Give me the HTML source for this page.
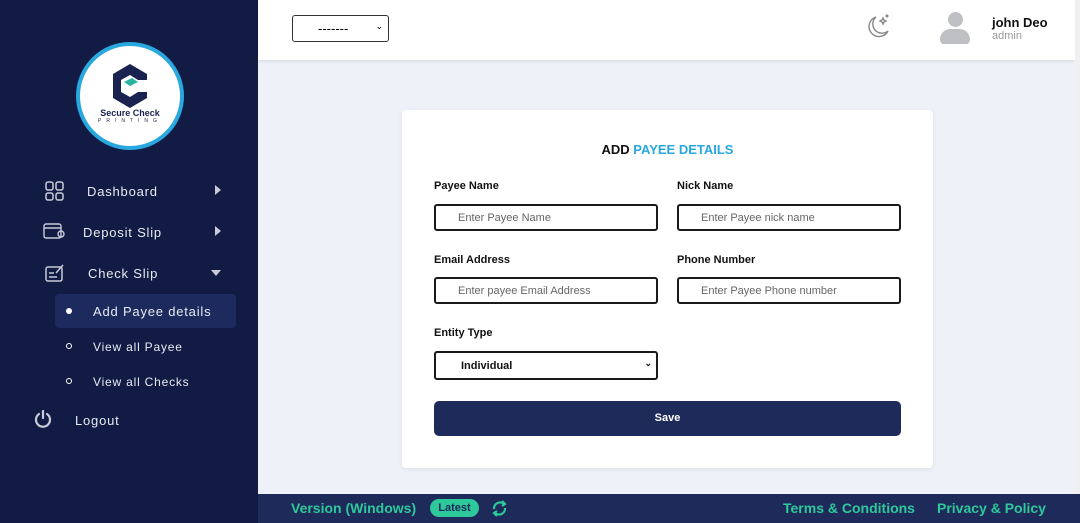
<!DOCTYPE html>
<html><head><style>
*{box-sizing:border-box;margin:0;padding:0}
body{width:1080px;height:523px;overflow:hidden;font-family:"Liberation Sans",sans-serif;background:#eef1f8;position:relative}
.sb{position:absolute;left:0;top:0;width:258px;height:523px;background:#111b44;color:#e8eaf2}
.logo{position:absolute;left:76px;top:42px;width:108px;height:108px;border-radius:50%;background:#fff;border:4px solid #29a8e0}
.nav{position:absolute;font-size:13px;letter-spacing:.8px}
.tri{position:absolute;width:0;height:0}
.hd{position:absolute;left:258px;top:0;width:817px;height:60px;background:#fff;box-shadow:0 2px 3px rgba(0,0,0,.08)}
.scroll{position:absolute;left:1075px;top:0;width:5px;height:494px;background:#f0f0f0}
.card{position:absolute;left:402px;top:110px;width:531px;height:358px;background:#fff;border-radius:4px;box-shadow:0 1px 4px rgba(0,0,0,.08)}
.lb{position:absolute;font-size:11px;font-weight:bold;color:#111}
.in{position:absolute;width:224px;height:27px;border:2px solid #1a1a1a;border-radius:3px;font-size:11px;color:#666;padding:6px 0 0 22px}
.ft{position:absolute;left:258px;top:494px;width:822px;height:29px;background:#1e2a5a;color:#2ec99a;font-weight:bold;font-size:14px}
</style></head><body>
<div class="sb">
 <div class="logo">
  <svg width="100" height="100" viewBox="0 0 100 100" style="position:absolute;left:0;top:0">
   <polygon points="50,18 67,28 67,34 58,34 50,29 41,34 41,46 50,51 58,46 67,46 67,52 50,62 33,52 33,28" fill="#1a2350"/>
   <polygon points="44,36 52,32 58,36 50,40" fill="#2ab3a0"/>
  </svg>
  <div style="position:absolute;top:62px;width:100%;text-align:center;font-size:9px;font-weight:bold;color:#1a2350">Secure Check</div>
  <div style="position:absolute;top:72px;left:18px;font-size:5px;letter-spacing:5px;color:#1a2350">PRINTING</div>
 </div>
 <svg style="position:absolute;left:45px;top:181px" width="20" height="20" fill="none" stroke="#c8cbd8" stroke-width="1.5"><rect x="1" y="1" width="7" height="8" rx="2"/><rect x="11" y="1" width="7" height="8" rx="2"/><rect x="1" y="12" width="7" height="7" rx="2"/><rect x="11" y="12" width="7" height="7" rx="2"/></svg>
 <div class="nav" style="left:87px;top:184px">Dashboard</div>
 <div class="tri" style="left:215px;top:185px;border-left:6px solid #c8cbd8;border-top:5px solid transparent;border-bottom:5px solid transparent"></div>
 <svg style="position:absolute;left:43px;top:223px" width="22" height="18" fill="none" stroke="#c8cbd8" stroke-width="1.4"><rect x="1" y="1" width="17" height="14" rx="2"/><line x1="1" y1="5" x2="18" y2="5"/><circle cx="18" cy="11" r="3"/></svg>
 <div class="nav" style="left:83px;top:225px">Deposit Slip</div>
 <div class="tri" style="left:215px;top:226px;border-left:6px solid #c8cbd8;border-top:5px solid transparent;border-bottom:5px solid transparent"></div>
 <svg style="position:absolute;left:45px;top:263px" width="20" height="20" fill="none" stroke="#c8cbd8" stroke-width="1.5"><rect x="1" y="4" width="16" height="14" rx="2"/><line x1="4" y1="10" x2="9" y2="10"/><line x1="4" y1="14" x2="12" y2="14"/><path d="M11 10 L18 2"/></svg>
 <div class="nav" style="left:88px;top:266px">Check Slip</div>
 <div class="tri" style="left:211px;top:270px;border-top:6px solid #c8cbd8;border-left:5px solid transparent;border-right:5px solid transparent"></div>
 <div style="position:absolute;left:55px;top:294px;width:181px;height:34px;background:#1d2a5e;border-radius:4px"></div>
 <div style="position:absolute;left:66px;top:308px;width:6px;height:6px;border-radius:50%;background:#fff"></div>
 <div class="nav" style="left:93px;top:304px">Add Payee details</div>
 <div style="position:absolute;left:66px;top:343px;width:6px;height:6px;border-radius:50%;border:1.5px solid #fff"></div>
 <div class="nav" style="left:93px;top:340px;font-size:12px">View all Payee</div>
 <div style="position:absolute;left:66px;top:378px;width:6px;height:6px;border-radius:50%;border:1.5px solid #fff"></div>
 <div class="nav" style="left:93px;top:375px;font-size:12px">View all Checks</div>
 <svg style="position:absolute;left:34px;top:410px" width="18" height="18" fill="none" stroke="#c8cbd8" stroke-width="2.2" stroke-linecap="round"><path d="M5 4 A7 7 0 1 0 13 4"/><line x1="9" y1="1" x2="9" y2="8"/></svg>
 <div class="nav" style="left:75px;top:413px">Logout</div>
</div>
<div class="hd">
 <div style="position:absolute;left:34px;top:15px;width:97px;height:27px;border:1px solid #333;border-radius:3px;font-size:13px;padding:5px 0 0 25px">-------<span style="position:absolute;right:5px;top:5px;font-size:9px">&#x2304;</span></div>
 <svg style="position:absolute;left:606px;top:12px" width="28" height="28" fill="none" stroke="#888" stroke-width="1.4"><path d="M12 5 A10 10 0 1 0 24 19 A8 8 0 0 1 12 5Z"/><path d="M18 8 l1 -2 l1 2 l2 1 l-2 1 l-1 2 l-1 -2 l-2 -1z"/><circle cx="23" cy="4" r="0.8" fill="#888"/></svg>
 <div style="position:absolute;left:682px;top:12px;width:30px;height:32px;overflow:hidden">
  <div style="position:absolute;left:8px;top:0;width:15px;height:15px;border-radius:50%;background:#bfc0c4"></div>
  <div style="position:absolute;left:0;top:17px;width:30px;height:16px;border-radius:15px 15px 8px 8px;background:#bfc0c4"></div>
 </div>
 <div style="position:absolute;left:734px;top:15px;font-size:13px;font-weight:bold;color:#111">john Deo</div>
 <div style="position:absolute;left:734px;top:30px;font-size:11px;color:#999">admin</div>
</div>
<div class="scroll"></div>
<div class="card">
 <div style="position:absolute;top:32px;width:100%;text-align:center;font-size:13px;font-weight:bold;color:#111">ADD <span style="color:#29a8e0">PAYEE DETAILS</span></div>
 <div class="lb" style="left:32px;top:70px">Payee Name</div>
 <div class="lb" style="left:275px;top:70px">Nick Name</div>
 <div class="in" style="left:32px;top:94px">Enter Payee Name</div>
 <div class="in" style="left:275px;top:94px">Enter Payee nick name</div>
 <div class="lb" style="left:32px;top:144px">Email Address</div>
 <div class="lb" style="left:275px;top:144px">Phone Number</div>
 <div class="in" style="left:32px;top:167px">Enter payee Email Address</div>
 <div class="in" style="left:275px;top:167px">Enter Payee Phone number</div>
 <div class="lb" style="left:32px;top:217px">Entity Type</div>
 <div class="in" style="left:32px;top:241px;height:29px;color:#111;font-weight:bold;padding-left:25px;padding-top:7px">Individual<span style="position:absolute;right:4px;top:5px;font-size:9px">&#x2304;</span></div>
 <div style="position:absolute;left:32px;top:291px;width:467px;height:35px;background:#1e2a5a;border-radius:5px;color:#fff;font-size:11px;font-weight:bold;text-align:center;line-height:35px">Save</div>
</div>
<div class="ft">
 <div style="position:absolute;left:33px;top:6px">Version (Windows)</div>
 <div style="position:absolute;left:172px;top:5px;width:49px;height:18px;border-radius:9px;background:#2ec99a;color:#1e2a5a;font-size:11px;text-align:center;line-height:18px">Latest</div>
 <svg style="position:absolute;left:232px;top:5px" width="19" height="19" fill="none" stroke="#2ec99a" stroke-width="2.2"><path d="M4 10 A6 6 0 0 1 14 5"/><path d="M15 9 A6 6 0 0 1 5 14"/><path d="M12 2 l3 3 l-3 2" /><path d="M7 17 l-3 -3 l3 -2"/></svg>
 <div style="position:absolute;left:525px;top:6px">Terms &amp; Conditions</div>
 <div style="position:absolute;left:679px;top:6px">Privacy &amp; Policy</div>
</div>
</body></html>
